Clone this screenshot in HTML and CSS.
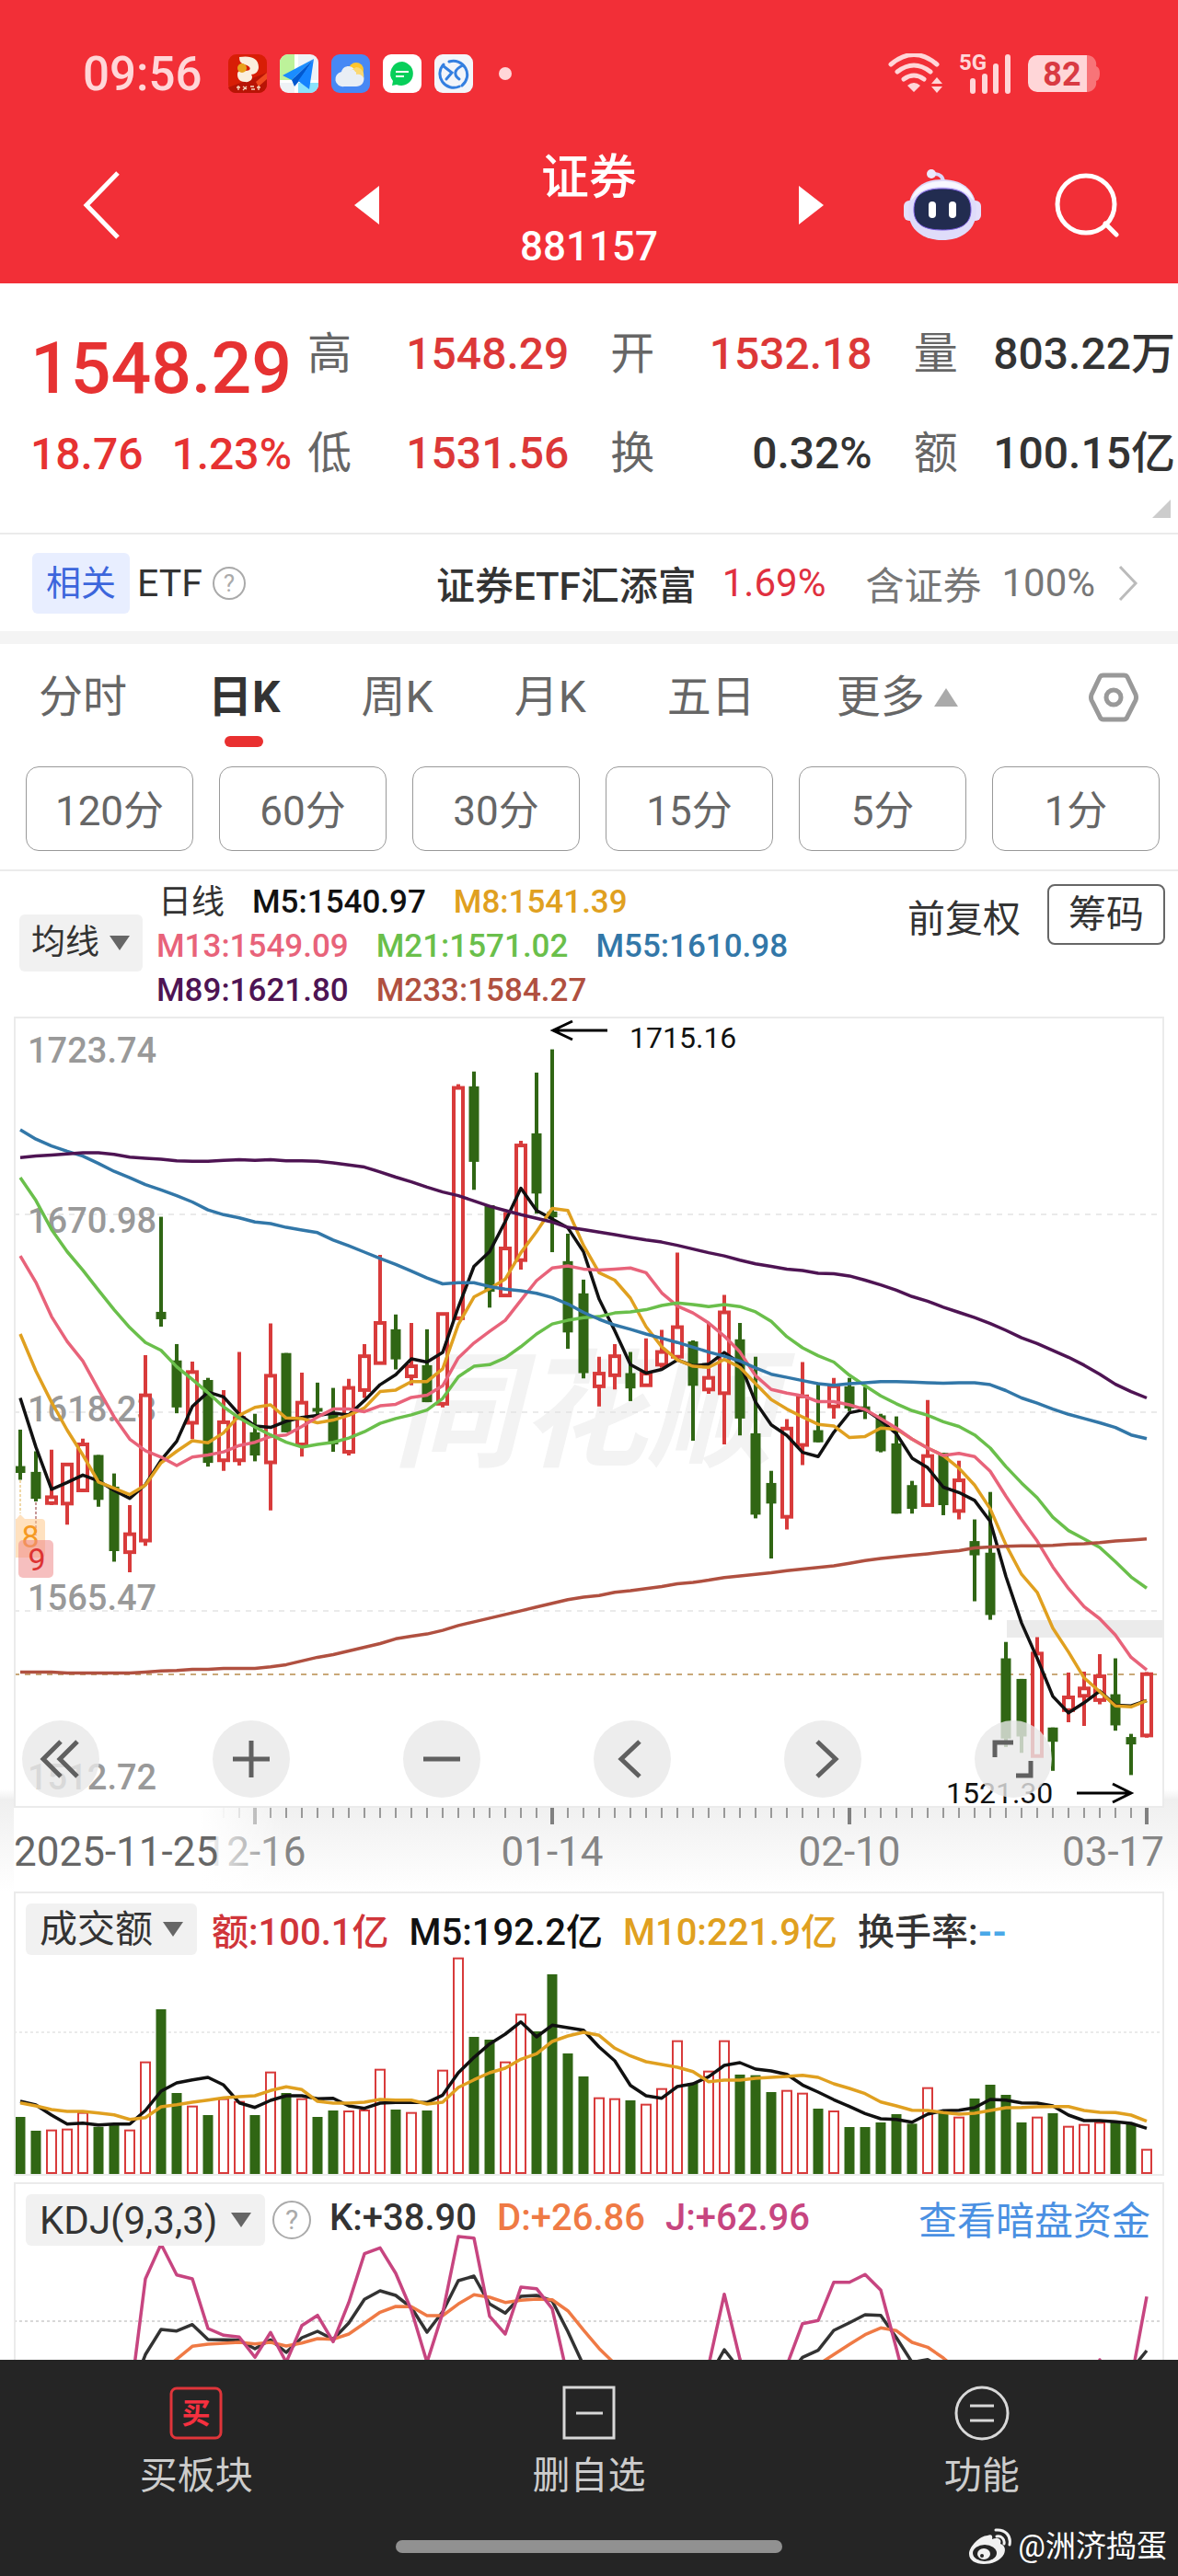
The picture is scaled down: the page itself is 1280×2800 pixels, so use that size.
FILE: index.html
```html
<!DOCTYPE html>
<html lang="zh-CN">
<head>
    <meta charset="UTF-8">
    <meta name="viewport" content="width=device-width, initial-scale=1.0">
    <title>证券 881157</title>
    <link rel="stylesheet" href="styles.css">
</head>
<body>
    <header class="top">
        <!-- 状态栏 -->
        <div class="status">
            <span class="clock">09:56</span>
            <div class="apps">
                <svg viewBox="0 0 42 42"><rect width="42" height="42" rx="9" fill="#d81e06"/><path d="M0 36 42 20v13a9 9 0 0 1-9 9H9a9 9 0 0 1-9-6z" fill="#b81405"/><path d="M30 30 42 20v7l-9 8z" fill="#f04a20"/><path d="M12 3c12-2 21 1 21 11 0 5-4 8-8 8 3 4-1 9-7 8-6 0-8-4-8-8 0-5 5-5 9-4 5 0 6-3 3-5-4-3-10-1-10-10z" fill="#fbeedd"/><circle cx="15" cy="15" r="5" fill="#e8a21d"/><path d="M9 36h4M11 34v5M16 35l4 3M20 35l-4 4M24 35h4M25 38h4M31 36h4M33 34v5" stroke="#f6d8c0" stroke-width="1.3"/></svg>
                <svg viewBox="0 0 42 42"><rect width="42" height="42" rx="9" fill="#eef2f6"/><path d="M9 0h7v28H0V9a9 9 0 0 1 9-9z" fill="#bdf29a"/><path d="M20 30h22v3a9 9 0 0 1-9 9H20z" fill="#8be2fb"/><path d="M16 0h4v42h-4zM0 28h42v3H0z" fill="#fff"/><path d="M37 5 3 23l10 5z" fill="#1a8cff"/><path d="M37 5 13 28l3 7 5-6z" fill="#0058d0"/><path d="m37 5-17 24 12 9z" fill="#1583ff"/></svg>
                <svg viewBox="0 0 42 42"><rect width="42" height="42" rx="9" fill="#4788f5"/><circle cx="27" cy="17" r="8" fill="#ffc62e"/><path d="M14 35a8 8 0 0 1-3-16c2-8 13-8 15 0 12-2 13 16 1 16z" fill="#e9eef5"/><path d="M20 18c3-3 8 0 7 4 4-1 7 1 8 4 2-9-5-12-8-12z" fill="#fbd873"/></svg>
                <svg viewBox="0 0 42 42"><rect width="42" height="42" rx="9" fill="#fff"/><path d="M21 8a13 13 0 1 1-6 25l-5 1 1-5A13 13 0 0 1 21 8z" fill="#07cf5a"/><path d="M14 19h14M14 24h9" stroke="#fff" stroke-width="2"/></svg>
                <svg viewBox="0 0 42 42"><rect width="42" height="42" rx="9" fill="#f3f5fa"/><g fill="none" stroke="#347fe0" stroke-width="3" stroke-linecap="round"><path d="M16 8a15 15 0 0 1 14 26M27 35a15 15 0 0 1-17-24"/><path d="M10 13l9 7-6 7M31 12c-9 4-11 10-4 15"/></g></svg>
            </div>
            <span class="dot"></span>
            <div class="signals">
                <svg class="wifi" viewBox="0 0 60 44"><g fill="none" stroke="#ffd6d8" stroke-width="5" stroke-linecap="round"><path d="M3 12q25-21 50 0M10 20q18-14 36 0M17 28q11-8 22 0"/></g><path d="m28 42-7-7q7-6 14 0zM53 26l6 7H47zM47 36h12l-6 7z" fill="#ffd6d8"/></svg>
                <svg class="cell" viewBox="0 0 58 44"><text x="0" y="18" class="net">5G</text><path d="M15 41V30M28 41V25M40 41V14M53 41V4" stroke="#ffd6d8" stroke-width="6" stroke-linecap="round"/></svg>
                <svg class="battery" viewBox="0 0 78 40"><path d="M64 0h1a10 10 0 0 1 9 12q4 1 4 8t-4 8a10 10 0 0 1-9 12h-1z" fill="#f87478"/><path d="M10 0h54v40H10A10 10 0 0 1 0 30V10A10 10 0 0 1 10 0z" fill="#ffd6d8"/><text x="37" y="33" class="level">82</text></svg>
            </div>
        </div>

        <!-- 标题栏 -->
        <nav class="titlebar">
            <div class="side">
                <button class="icon-btn back" aria-label="返回"><svg viewBox="0 0 44 76"><path d="M40 3 6 38l34 35" fill="none" stroke="#fff" stroke-width="5"/></svg></button>
                <button class="icon-btn step" aria-label="上一个"><svg viewBox="0 0 27 42"><path d="M27 0v42L0 21z" fill="#fff"/></svg></button>
            </div>
            <div class="title">
                <h1>证券</h1>
                <p>881157</p>
            </div>
            <div class="side right">
                <button class="icon-btn step" aria-label="下一个"><svg viewBox="0 0 27 42"><path d="M0 0v42l27-21z" fill="#fff"/></svg></button>
                <button class="icon-btn robot" aria-label="智能助手"><svg viewBox="0 0 84 78">
                    <path d="M31 5q13-1 12 12" fill="none" stroke="#dcd7fa" stroke-width="4"/><circle cx="30" cy="5" r="5" fill="#eceafd"/>
                    <rect x="0" y="34" width="14" height="22" rx="6" fill="#e4e0fb"/><rect x="70" y="34" width="14" height="22" rx="6" fill="#e4e0fb"/>
                    <path d="M42 11c24 0 37 14 37 34S64 77 42 77 5 65 5 45s13-34 37-34z" fill="#dfdcfa"/><path d="M42 13c20 0 31 9 34 21-10-12-20-15-34-15S18 22 8 34c3-12 14-21 34-21z" fill="#f8f7ff"/>
                    <path d="M42 21c22 0 31 8 31 23S63 66 42 66 11 59 11 44s9-23 31-23z" fill="#222c50" stroke="#7a5be0" stroke-width="1"/>
                    <rect x="27" y="35" width="8" height="18" rx="4" fill="#fff"/><rect x="49" y="35" width="8" height="18" rx="4" fill="#fff"/></svg></button>
                <button class="icon-btn search" aria-label="搜索"><svg viewBox="0 0 70 70"><circle cx="34" cy="34" r="31" fill="none" stroke="#fff" stroke-width="5"/><path d="m55 55 12 12" stroke="#fff" stroke-width="5" stroke-linecap="round"/></svg></button>
            </div>
        </nav>
    </header>

    <main>
        <!-- 行情 -->
        <section class="quote">
            <div class="summary">
                <strong>1548.29</strong>
                <div class="change"><span>18.76</span><span>1.23%</span></div>
            </div>
            <dl class="stats">
                <div><dt>高</dt><dd class="up">1548.29</dd></div>
                <div><dt>开</dt><dd class="up">1532.18</dd></div>
                <div><dt>量</dt><dd>803.22万</dd></div>
                <div><dt>低</dt><dd class="up">1531.56</dd></div>
                <div><dt>换</dt><dd>0.32%</dd></div>
                <div><dt>额</dt><dd>100.15亿</dd></div>
            </dl>
            <span class="corner"></span>
        </section>

        <!-- 相关ETF -->
        <section class="etf">
            <span class="tag">相关</span>
            <span class="etf-word">ETF</span>
            <button class="help" aria-label="ETF说明">?</button>
            <a class="etf-link" href="#">
                <span class="etf-name">证券ETF汇添富</span>
                <span class="etf-rate">1.69%</span>
                <span class="etf-part">含证券</span>
                <span>100%</span>
                <svg viewBox="0 0 24 40"><path d="m3 2 17 18L3 38" fill="none" stroke="#bbb" stroke-width="3"/></svg>
            </a>
        </section>

        <!-- 周期 -->
        <section class="periods">
            <div class="tabs">
                <button>分时</button>
                <button class="active">日K</button>
                <button>周K</button>
                <button>月K</button>
                <button>五日</button>
                <button class="more">更多</button>
                <button class="setting" aria-label="设置"><svg viewBox="0 0 56 56"><path d="M17 4h22q3 0 4 2l9 19q1 3 0 6l-9 18q-1 3-4 3H17q-3 0-4-3L4 31q-1-3 0-6l9-19q1-2 4-2z" fill="none" stroke="#999" stroke-width="5"/><circle cx="28" cy="28" r="8" fill="none" stroke="#999" stroke-width="5"/></svg></button>
            </div>
            <div class="minutes">
                <button>120分</button>
                <button>60分</button>
                <button>30分</button>
                <button>15分</button>
                <button>5分</button>
                <button>1分</button>
            </div>
        </section>

        <!-- K线 -->
        <section class="kline">
            <div class="ma-bar">
                <label class="picker"><select aria-label="主图指标"><option>均线</option></select></label>
                <div class="ma-list">
                    <div><span class="ma-name">日线</span><span class="m5">M5:1540.97</span><span class="m8">M8:1541.39</span></div>
                    <div><span class="m13">M13:1549.09</span><span class="m21">M21:1571.02</span><span class="m55">M55:1610.98</span></div>
                    <div><span class="m89">M89:1621.80</span><span class="m233">M233:1584.27</span></div>
                </div>
                <span class="adjust">前复权</span>
                <button class="chips">筹码</button>
            </div>
            <div class="panel">
                <svg id="price" viewBox="2 2 1246 856"></svg>
                <div class="tools">
                    <button aria-label="最早"><svg viewBox="0 0 40 40"><path d="M20 1 1 20l19 19M38 1 19 20l19 19"/></svg></button>
                    <button aria-label="放大"><svg viewBox="0 0 40 40"><path d="M20 0v40M0 20h40"/></svg></button>
                    <button aria-label="缩小"><svg viewBox="0 0 40 40"><path d="M0 20h40"/></svg></button>
                    <button aria-label="左移"><svg viewBox="0 0 40 40"><path d="M28 1 8 20l20 19"/></svg></button>
                    <button aria-label="右移"><svg viewBox="0 0 40 40"><path d="m14 1 20 19-20 19"/></svg></button>
                    <button aria-label="全屏"><svg viewBox="0 0 40 40"><path d="M0 18V2h20M23 38h16V22"/></svg></button>
                </div>
            </div>
            <svg id="axis" viewBox="0 0 1250 91"></svg>
        </section>

        <!-- 成交额 -->
        <section class="panel volume">
            <div class="legend">
                <label class="picker"><select aria-label="成交指标"><option>成交额</option></select></label>
                <span class="amount">额:100.1亿</span>
                <span class="m5">M5:192.2亿</span>
                <span class="m8">M10:221.9亿</span>
                <span class="turnover">换手率:<b>--</b></span>
            </div>
            <svg id="volume" viewBox="2 0 1246 238"></svg>
        </section>

        <!-- KDJ -->
        <section class="panel kdj">
            <div class="legend">
                <label class="picker"><select aria-label="副图指标"><option>KDJ(9,3,3)</option></select></label>
                <button class="help" aria-label="KDJ说明">?</button>
                <span class="k">K:+38.90</span>
                <span class="d">D:+26.86</span>
                <span class="j">J:+62.96</span>
                <a href="#">查看暗盘资金</a>
            </div>
            <svg id="kdj" viewBox="2 0 1246 144"></svg>
        </section>
    </main>

    <footer class="bottom">
        <div class="actions">
            <button class="buy"><svg viewBox="0 0 60 60"><rect x="3" y="3" width="54" height="54" rx="6"/><text x="30" y="41">买</text></svg>买板块</button>
            <button><svg viewBox="0 0 60 60"><path d="M3 2h54v55H3zM16 30h29"/></svg>删自选</button>
            <button><svg viewBox="0 0 60 60"><circle cx="30" cy="30" r="28"/><path d="M17 22h26M17 38h26"/></svg>功能</button>
        </div>
        <span class="home"></span>
        <div class="author">
            <svg viewBox="0 0 48 40"><path d="M21 8c4-2 6 0 5 4 5-2 11-1 9 5 5 2 6 6 4 11-4 8-14 11-22 11C8 39 1 35 1 28 1 20 13 8 21 8z" fill="#f1f1f1"/><ellipse cx="18" cy="27" rx="13" ry="9" fill="#252525"/><ellipse cx="17" cy="28" rx="7" ry="6" fill="#f1f1f1"/><circle cx="15" cy="30" r="2" fill="#252525"/><path d="M30 2c10-1 17 6 15 16M31 9c5-1 9 3 8 8" fill="none" stroke="#f1f1f1" stroke-width="3" stroke-linecap="round"/></svg>
            @洲济捣蛋
        </div>
    </footer>

    <script src="chart.js"></script>
</body>
</html>
```
FILE: styles.css
```css
* {
    box-sizing: border-box;
}

body {
    margin: 0;
    background-color: #fff;
    color: #333;
    font-family: Roboto, "Noto Sans CJK SC", sans-serif;
}

button, select {
    margin: 0;
    padding: 0;
    border: none;
    background: none;
    color: inherit;
    font: inherit;
    cursor: pointer;
}

a {
    color: inherit;
    text-decoration: none;
}

h1, p, dl, dd {
    margin: 0;
}

svg {
    display: block;
}

/* 顶部 */
.top {
    height: 308px;
    background-color: #f22f37;
    color: #fff;
}

.status {
    display: flex;
    align-items: center;
    height: 160px;
    padding: 0 85px 0 90px;
}

.clock {
    width: 158px;
    color: #ffd6d8;
    font-size: 51px;
    font-weight: 500;
}

.apps {
    display: flex;
    gap: 14px;
}

.apps svg {
    width: 42px;
    height: 42px;
}

.dot {
    width: 14px;
    height: 14px;
    margin-left: 28px;
    border-radius: 50%;
    background-color: #ffd6d8;
}

.signals {
    display: flex;
    align-items: center;
    gap: 17px;
    margin-left: auto;
}

.wifi {
    width: 60px;
    height: 44px;
}

.cell {
    width: 58px;
    height: 44px;
    overflow: visible;
}

.battery {
    width: 78px;
    height: 40px;
}

.net {
    fill: #ffd6d8;
    font-size: 24px;
    font-weight: 700;
}

.level {
    fill: #d93a42;
    font-size: 36px;
    font-weight: 700;
    text-anchor: middle;
}

.titlebar {
    display: grid;
    grid-template-columns: 1fr 456px 1fr;
    padding: 0 64px;
}

.side {
    display: flex;
    align-items: center;
    justify-content: space-between;
    height: 126px;
}

.back {
    padding-left: 24px;
}

.back svg {
    width: 44px;
    height: 76px;
}

.step svg {
    width: 27px;
    height: 42px;
}

.robot {
    margin-left: 6px;
}

.robot svg {
    width: 84px;
    height: 78px;
}

.search svg {
    width: 70px;
    height: 70px;
}

.title {
    text-align: center;
}

.title h1 {
    font-size: 52px;
    font-weight: 500;
    line-height: 68px;
}

.title p {
    font-size: 44px;
    font-weight: 500;
    line-height: 80px;
}

/* 行情 */
.quote {
    position: relative;
    display: flex;
    height: 273px;
    padding: 47px 3px 0 33px;
    border-bottom: 2px solid #ebebeb;
}

.summary {
    width: 284px;
    color: #e63232;
    font-weight: 500;
}

.summary strong {
    display: block;
    font-size: 77px;
    font-weight: 500;
    line-height: 92px;
}

.change {
    display: flex;
    justify-content: space-between;
    margin-top: 17px;
    font-size: 48px;
    line-height: 60px;
}

.stats {
    display: grid;
    flex: 1;
    grid-template-columns: 1fr 1fr 1fr;
    column-gap: 45px;
    row-gap: 48px;
    align-content: start;
    margin-left: 17px;
    font-size: 48px;
    line-height: 60px;
}

.stats div {
    display: flex;
    justify-content: space-between;
    white-space: nowrap;
}

.stats dt {
    color: #666;
}

.stats dd {
    font-weight: 500;
}

.stats .up {
    color: #dc3838;
}

.corner {
    position: absolute;
    right: 8px;
    bottom: 16px;
    border-left: 20px solid transparent;
    border-bottom: 20px solid #ccc;
}

/* ETF */
.etf {
    display: flex;
    align-items: center;
    height: 119px;
    padding: 0 42px 0 35px;
    border-bottom: 14px solid #f4f4f4;
    font-size: 42px;
}

.tag {
    width: 106px;
    border-radius: 6px;
    background-color: #e8eeff;
    color: #3c66dc;
    font-size: 38px;
    line-height: 66px;
    text-align: center;
}

.etf-word {
    margin-left: 8px;
    font-size: 41px;
}

.help {
    width: 36px;
    height: 36px;
    margin-left: 11px;
    border: 2px solid #aaa;
    border-radius: 50%;
    color: #aaa;
    font-size: 26px;
    line-height: 32px;
}

.etf-link {
    display: flex;
    align-items: center;
    margin-left: auto;
    color: #777;
}

.etf-name {
    color: #333;
    font-weight: 500;
}

.etf-rate {
    margin: 0 43px 0 28px;
    color: #e0303f;
}

.etf-part {
    margin-right: 22px;
}

.etf-link svg {
    width: 24px;
    height: 40px;
    margin-left: 24px;
}

/* 周期 */
.periods {
    padding-top: 28px;
    border-bottom: 2px solid #ebebeb;
}

.tabs {
    display: flex;
    align-items: center;
    gap: 88px;
    height: 60px;
    padding: 0 42px;
    color: #666;
    font-size: 48px;
    line-height: 60px;
}

.active {
    position: relative;
    color: #333;
    font-weight: 700;
}

.active::after {
    content: "";
    position: absolute;
    bottom: -24px;
    left: 50%;
    width: 42px;
    height: 12px;
    margin-left: -21px;
    border-radius: 6px;
    background-color: #e93030;
}

.more {
    display: flex;
    align-items: center;
    gap: 10px;
}

.more::after {
    content: "";
    border: 13px solid transparent;
    border-top: none;
    border-bottom: 20px solid #aaa;
}

.setting {
    margin-left: auto;
}

.setting svg {
    width: 56px;
    height: 56px;
}

.minutes {
    display: flex;
    gap: 28px;
    padding: 45px 20px 20px 28px;
}

.minutes button {
    flex: 1;
    height: 92px;
    padding-bottom: 3px;
    border: 1px solid #999;
    border-radius: 14px;
    color: #666;
    font-size: 44px;
}

/* 均线 */
.ma-bar {
    display: flex;
    align-items: flex-start;
    height: 158px;
    padding: 10px 14px 0 21px;
    font-size: 36px;
    line-height: 48px;
}

.picker {
    display: flex;
    align-items: center;
    gap: 11px;
    border-radius: 6px;
    background-color: #f1f1f1;
}

.picker select {
    appearance: none;
}

.picker::after {
    content: "";
    border: 11px solid transparent;
    border-top: 16px solid #666;
    border-bottom: none;
}

.ma-bar .picker {
    height: 62px;
    margin-top: 37px;
    padding: 0 14px 0 13px;
    font-size: 37px;
}

.ma-list {
    margin-left: 15px;
}

.ma-list div {
    display: flex;
    gap: 30px;
}

.ma-name {
    padding-left: 2px;
}

.ma-list .m5,
.ma-list .m8,
.ma-list .m13,
.ma-list .m21,
.ma-list .m55,
.ma-list .m89,
.ma-list .m233 {
    font-size: 35px;
    font-weight: 500;
}

.m5 { color: #111; }
.m8 { color: #e0a020; }
.m13 { color: #e8637a; }
.m21 { color: #6abf4b; }
.m55 { color: #3277a8; }
.m89 { color: #4e1453; }
.m233 { color: #b05040; }

.adjust {
    margin: 18px 29px 0 auto;
    font-size: 41px;
}

.chips {
    height: 66px;
    margin-top: 4px;
    padding: 0 21px;
    border: 2px solid #666;
    border-radius: 8px;
    font-size: 41px;
}

/* 图表 */
.kline {
    background: linear-gradient(#fff 90%, #efefef 91%, #fff);
}

.panel {
    position: relative;
    margin: 0 15px;
    border: 2px solid #ebebeb;
    background-color: #fff;
}

.panel > svg,
#axis {
    width: 100%;
    height: auto;
}

#axis {
    padding: 0 15px;
}

.scale {
    fill: #999;
    font-size: 38px;
    font-weight: 500;
}

.peak {
    fill: #111;
    font-size: 32px;
}

.brand {
    fill: #f3f3f3;
    font-size: 138px;
    font-style: italic;
    font-weight: 700;
}

.sign {
    font-size: 34px;
    text-anchor: middle;
}

.date {
    fill: #858585;
    font-size: 44px;
    text-anchor: middle;
}

.date.first {
    fill: #666;
    text-anchor: start;
}

.date.last {
    text-anchor: end;
}

.tools {
    position: absolute;
    left: 7px;
    bottom: 9px;
    display: flex;
    gap: 123px;
}

.tools button {
    display: flex;
    align-items: center;
    justify-content: center;
    width: 84px;
    height: 84px;
    border-radius: 50%;
    background-color: rgba(233, 233, 233, 0.8);
}

.tools svg {
    width: 40px;
    height: 40px;
    overflow: visible;
    fill: none;
    stroke: #606060;
    stroke-width: 5px;
}

.legend {
    position: relative;
    z-index: 1;
    display: flex;
    align-items: center;
    height: 67px;
    padding: 11px 13px 0 11px;
    font-size: 40px;
    white-space: nowrap;
}

.legend .picker {
    height: 56px;
    padding: 0 15px;
}

.volume .picker {
    font-size: 41px;
}

.legend span {
    font-weight: 500;
}

.amount {
    margin-left: 16px;
    color: #d0353a;
}

.legend .m5,
.legend .m8,
.turnover {
    margin-left: 22px;
}

.turnover b {
    color: #4aa8e8;
}

.kdj {
    margin-top: 7px;
    border-bottom: none;
}

.kdj .picker {
    gap: 14px;
    font-size: 42px;
}

.kdj .help {
    width: 42px;
    height: 42px;
    margin-left: 8px;
    font-size: 30px;
    line-height: 38px;
}

.kdj #kdj {
    margin-top: -20px;
}

.k,
.d,
.j,
.legend a {
    padding-bottom: 6px;
}

.k {
    margin-left: 20px;
}

.d {
    margin-left: 22px;
    color: #ef7a45;
}

.j {
    margin-left: 22px;
    color: #c74580;
}

.legend a {
    margin-left: auto;
    color: #4a90e2;
    font-size: 42px;
}

/* 底部 */
.bottom {
    position: relative;
    height: 235px;
    background-color: #252525;
    color: #ccc;
}

.actions {
    display: flex;
}

.actions button {
    display: flex;
    flex: 1;
    flex-direction: column;
    align-items: center;
    gap: 8px;
    padding-top: 28px;
    font-size: 41px;
    line-height: 60px;
}

.actions svg {
    width: 60px;
    height: 60px;
    fill: none;
    stroke: #d8d8d8;
    stroke-width: 3px;
}

.buy rect {
    stroke: #e0353a;
}

.buy text {
    fill: #f5303f;
    stroke: none;
    font-size: 31px;
    font-weight: 700;
    text-anchor: middle;
}

.home {
    position: absolute;
    bottom: 25px;
    left: 50%;
    width: 420px;
    height: 14px;
    margin-left: -210px;
    border-radius: 7px;
    background-color: #919191;
}

.author {
    position: absolute;
    right: 12px;
    bottom: 8px;
    display: flex;
    align-items: center;
    gap: 6px;
    color: #fff;
    font-size: 33px;
    line-height: 48px;
}

.author svg {
    width: 48px;
    height: 40px;
}
```
FILE: chart.js
```js
const UP = '#d83b3b';
const DOWN = '#306614';
const STEP = 17;
const x = i => 7 + STEP * i;

// 价格图高度分成 1498 格，数值从顶部往下数
const py = v => (v - 25) * 860 / 1498;

// [涨跌, 最高, 实体上沿, 实体下沿, 最低]
const candles = [
    [0,807,876,889,902],[0,848,887,938,943],[1,845,935,946,950],[1,870,873,947,987],[1,824,835,922,925],
    [0,855,855,940,953],[0,890,915,1037,1057],[1,950,1005,1039,1077],[1,666,742,1017,1027],[0,404,584,598,612],
    [0,645,676,765,776],[1,678,698,794,825],[0,709,713,870,877],[1,732,793,865,885],[1,660,785,865,875],
    [0,777,812,856,867],[1,606,705,869,960],[0,662,662,812,812],[1,699,756,835,858],[0,718,766,773,780],
    [0,728,778,835,849],[1,711,728,849,856],[1,645,668,732,747],[1,476,605,681,683],[0,589,617,674,693],
    [1,605,687,706,723],[0,617,685,755,755],[1,586,588,758,765],[1,153,160,596,600],[0,129,157,300,353],
    [0,382,382,546,576],[1,395,464,553,555],[1,260,269,486,504],[0,131,246,360,398],[0,87,394,405,471],
    [0,436,488,623,654],[0,523,549,700,710],[1,669,701,725,763],[1,645,668,704,731],[0,660,700,729,753],
    [1,634,701,723,725],[1,618,660,684,690],[1,472,613,669,672],[0,638,640,724,828],[1,605,709,731,739],
    [1,552,585,738,835],[0,605,636,786,818],[0,669,814,968,975],[0,885,908,947,1051],[1,787,805,972,996],
    [1,679,744,836,874],[0,718,808,831,831],[1,709,725,763,786],[0,709,725,767,772],[0,726,763,773,787],
    [0,777,780,848,850],[0,782,833,966,966],[0,904,912,957,966],[1,751,857,950,951],[0,851,851,950,969],
    [1,866,903,961,977],[0,977,1018,1045,1132],[0,925,1040,1158,1167],[0,1209,1240,1392,1408],[0,1279,1279,1388,1419],
    [1,1200,1231,1425,1427],[0,1371,1371,1398,1453],[1,1267,1314,1338,1361],[1,1265,1297,1311,1368],[1,1232,1274,1319,1327],
    [0,1240,1308,1367,1377],[0,1383,1389,1403,1461],[1,1266,1270,1386,1390]
];

const averages = [
    ['#111', [747,840,920,907,893,904,922,937,911,865,829,763,736,745,778,800,803,791,784,780,776,779,752,722,703,673,679,661,575,498,470,413,350,392,408,425,470,560,620,684,700,693,675,686,683,661,681,755,798,818,850,858,812,775,769,789,815,861,879,916,926,941,981,1085,1173,1240,1312,1343,1324,1302,1329,1330,1320]],
    ['#e0a020', [626,696,755,808,855,906,918,930,912,870,848,828,832,813,780,765,760,785,786,794,789,780,766,735,732,716,716,692,608,556,540,522,472,432,388,392,458,510,524,558,612,650,675,687,689,674,689,720,750,768,783,797,800,822,820,804,806,825,842,856,880,912,957,1025,1081,1115,1183,1228,1277,1303,1330,1332,1320]],
    ['#e8637a', [478,528,593,640,677,731,783,825,847,859,875,859,855,849,837,831,820,817,801,783,768,768,773,762,759,746,742,724,671,643,621,600,562,525,501,497,503,505,503,501,510,548,573,586,605,630,660,705,731,738,743,754,754,760,769,786,804,825,842,856,852,858,886,933,977,1018,1067,1108,1142,1165,1196,1238,1262]],
    ['#6abf4b', [330,373,428,470,505,543,580,614,642,657,688,712,737,764,785,802,817,831,840,835,831,823,811,795,786,779,770,748,707,687,684,671,650,626,607,600,595,593,586,584,580,572,567,570,574,570,574,584,602,631,652,667,679,704,724,743,758,771,780,792,801,817,842,877,908,936,973,998,1014,1030,1057,1086,1107]],
    ['#3277a8', [239,257,270,280,289,303,318,330,343,353,364,376,391,400,406,414,417,424,429,434,448,459,471,483,494,507,520,531,529,529,536,541,544,549,557,569,585,598,609,617,626,634,642,651,660,668,677,690,702,708,714,720,723,720,718,716,716,717,718,719,718,718,722,733,747,757,768,778,786,794,803,817,824]],
    ['#4e1453', [292,289,287,285,283,283,286,291,293,295,298,299,299,297,296,297,296,298,298,299,302,306,310,319,329,338,348,357,364,374,384,392,400,407,414,424,428,433,438,443,448,452,458,465,472,478,486,493,498,503,506,511,512,516,524,533,543,555,564,575,585,595,606,619,633,644,657,670,685,702,721,735,747]],
    ['#b05040', [1266,1266,1266,1268,1268,1268,1268,1268,1266,1264,1263,1261,1261,1259,1259,1259,1256,1252,1245,1238,1233,1226,1219,1212,1203,1198,1194,1187,1178,1171,1164,1157,1150,1143,1136,1129,1124,1121,1115,1112,1108,1104,1099,1096,1092,1087,1084,1081,1078,1074,1071,1068,1065,1060,1055,1051,1048,1045,1042,1039,1036,1031,1029,1028,1027,1027,1026,1024,1023,1021,1018,1016,1014]]
];

function line(values, y, color, start = 0) {
    const points = values.map((v, i) => x(i + start) + ',' + y(v).toFixed(1)).join(' ');
    return `<polyline points="${points}" fill="none" stroke="${color}" stroke-width="3.5" stroke-linejoin="round"/>`;
}

function drawPrice() {
    let s = '<text class="brand" x="412" y="478">同花顺</text>';
    [215, 430, 646].forEach(y => {
        s += `<path d="M0 ${y}H1250" stroke="#e3e3e3" stroke-width="1.5" stroke-dasharray="6 6"/>`;
    });
    [['1723.74', 50], ['1670.98', 235], ['1618.23', 440], ['1565.47', 645], ['1512.72', 840]].forEach(([t, y]) => {
        s += `<text class="scale" x="15" y="${y}">${t}</text>`;
    });
    s += '<path d="M1079 656h171v19h-171z" fill="#ebebeb"/>';
    s += '<path d="M0 715H1250" stroke="#c9a878" stroke-width="2" stroke-dasharray="6 6"/>';

    candles.forEach(([up, high, top, bottom, low], i) => {
        const cx = x(i);
        const t = py(top), b = py(bottom);
        if (up) {
            s += `<path d="M${cx} ${py(high)}V${t}M${cx} ${b}V${py(low)}" stroke="${UP}" stroke-width="4"/>`;
            s += `<rect x="${cx - 5}" y="${t}" width="10" height="${b - t}" fill="#fff" stroke="${UP}" stroke-width="4"/>`;
        } else {
            s += `<path d="M${cx} ${py(high)}V${py(low)}" stroke="${DOWN}" stroke-width="4"/>`;
            s += `<rect x="${cx - 5.5}" y="${t}" width="11" height="${b - t}" fill="${DOWN}"/>`;
        }
    });
    averages.forEach(([color, values]) => s += line(values, py, color));

    // 九转信号
    s += '<path d="M7 504v36" stroke="#e0b050" stroke-dasharray="3 2"/><path d="M24 528v36" stroke="#903030" stroke-dasharray="3 2"/>';
    s += '<path d="M3 546l4-5 5 5h18q4 0 4 4v34q0 4-4 4H3q-4 0-4-4v-34q0-4 4-4z" fill="#ffc98a" opacity=".55"/><text class="sign" x="18" y="577" fill="#f59a23">8</text>';
    s += '<rect x="5" y="569" width="38" height="41" rx="5" fill="#ee8a8a" opacity=".55"/><text class="sign" x="25" y="602" fill="#dd3333">9</text>';

    // 最高、最低价
    s += '<path d="M645 15H586M607 5 586 15l21 10" fill="none" stroke="#000" stroke-width="3"/><text class="peak" x="669" y="34">1715.16</text>';
    s += '<path d="M1155 844h58M1194 834l20 10-20 10" fill="none" stroke="#000" stroke-width="3"/><text class="peak" x="1013" y="855">1521.30</text>';
    document.getElementById('price').innerHTML = s;
}

function drawAxis() {
    let s = '';
    for (let i = 13; i < 73; i++) {
        const major = (i - 15) % 19 === 0;
        s += `<path d="M${x(i)} 0v${major ? 18 : 11}" stroke="${major ? '#808080' : '#999'}" stroke-width="${major ? 4 : 2}" opacity="${i < 16 ? (i - 12) / 4 : 1}"/>`;
    }
    s += `<text class="date" x="${x(15)}" y="63">12-16</text><text class="date" x="${x(34)}" y="63">01-14</text>`;
    s += `<text class="date" x="${x(53)}" y="63">02-10</text><text class="date last" x="1250" y="63">03-17</text>`;
    s += '<defs><linearGradient id="fade"><stop offset=".7" stop-color="#fff"/><stop offset="1" stop-color="#fff" stop-opacity="0"/></linearGradient></defs>';
    s += '<rect x="-15" width="310" height="91" fill="url(#fade)"/><text class="date first" x="0" y="63">2025-11-25</text>';
    document.getElementById('axis').innerHTML = s;
}

// 成交额：三格为一像素
const volumes = [1086,1131,1130,1127,1073,1118,1112,1130,908,735,1008,1052,1080,1028,1037,1080,941,1008,1028,1086,1065,1068,1065,932,1062,1073,1065,935,569,825,834,908,752,807,621,879,954,1025,1028,1032,1046,995,839,975,938,839,948,950,1005,1001,1010,1059,1068,1119,1119,1104,1077,1108,992,1065,1088,1026,981,1014,1104,1088,1074,1118,1112,1105,1100,1108,1193];
const volumeM5 = [1035,1047,1080,1109,1106,1112,1109,1109,1065,1002,975,965,957,982,1040,1055,1032,1017,1017,1027,1025,1050,1058,1041,1039,1039,1039,1015,942,892,848,816,776,825,787,795,803,858,903,983,1017,1025,987,978,955,918,909,930,936,947,982,1005,1030,1052,1075,1092,1094,1103,1077,1066,1064,1056,1029,1031,1040,1041,1050,1080,1098,1098,1102,1107,1123];
const volumeM10 = [1040,1050,1062,1068,1068,1073,1079,1094,1088,1053,1046,1038,1031,1024,1020,1017,1000,988,997,1035,1041,1041,1038,1029,1031,1031,1044,1038,990,965,942,927,898,880,840,822,810,820,862,887,906,915,924,938,971,966,966,960,957,954,950,957,978,993,1010,1037,1050,1064,1065,1072,1077,1074,1065,1056,1055,1053,1052,1052,1065,1071,1072,1080,1100];

function drawVolume() {
    const y = v => 238 - (1272 - v) / 3;
    let s = '<path d="M0 84H1250" stroke="#e3e3e3" stroke-width="1.5" stroke-dasharray="3 3"/>';
    volumes.forEach((v, i) => {
        if (candles[i][0]) {
            s += `<rect x="${x(i) - 5}" y="${y(v)}" width="10" height="${237 - y(v)}" fill="#fff" stroke="${UP}" stroke-width="2"/>`;
        } else {
            s += `<rect x="${x(i) - 5.5}" y="${y(v)}" width="11" height="${238 - y(v)}" fill="${DOWN}"/>`;
        }
    });
    s += line(volumeM5, y, '#111') + line(volumeM10, y, '#e0a020');
    document.getElementById('volume').innerHTML = s;
}

const kdjJ = [720,318,205,305,318,480,502,508,574,493,590,470,437,523,395,236,217,300,420,590,430,180,185,440,498,345,350,415,640,720,720,720,720,720,720,720,650,600,368,580,720,720,600,464,454,329,329,304,355,545,740,740,740,740,740,740,740,740,740,740,640,740,582,740,650,376];
const kdjK = [700,565,483,488,467,516,517,518,546,517,558,510,489,515,462,385,357,372,412,492,425,324,309,400,430,375,372,390,490,600,700,700,700,700,700,700,700,640,549,615,700,700,640,574,551,486,461,435,437,510,590,581,610,700,700,700,700,700,700,700,700,700,700,700,615,552];
const kdjD = [700,660,620,580,538,531,528,525,530,525,537,527,513,515,498,463,427,408,409,438,438,400,370,378,395,388,384,386,422,485,545,595,640,700,700,700,700,700,700,700,700,700,700,640,598,565,532,500,478,487,525,541,576,620,700,700,700,700,700,700,700,700,700,700,700,700];

function drawKdj() {
    const y = v => (v - 150) / 3;
    document.getElementById('kdj').innerHTML =
        '<path d="M0 102H1250" stroke="#ccc" stroke-width="1.5" stroke-dasharray="3 3"/>' +
        line(kdjK, y, '#333', 7) + line(kdjD, y, '#ef7a45', 7) + line(kdjJ, y, '#c74580', 7);
}

drawPrice();
drawAxis();
drawVolume();
drawKdj();
```
